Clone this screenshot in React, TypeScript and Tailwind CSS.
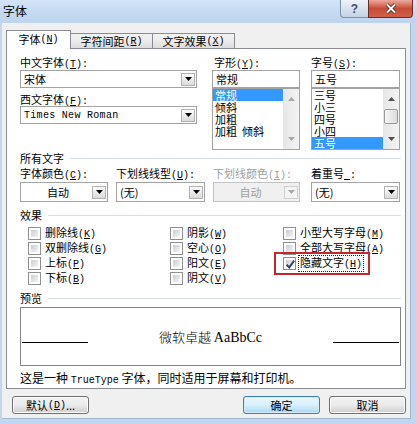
import React from "react";

const cjk = "font-['Noto_Sans_CJK_SC',sans-serif]";

function Acc({ k }: { k: string }) {
  return (
    <span className="font-['Liberation_Mono',monospace] text-[10px]">
      (<span className="underline">{k}</span>)
    </span>
  );
}

function Label({ text, k, colon = true, disabled }: { text: string; k: string; colon?: boolean; disabled?: boolean }) {
  return (
    <div className={`h-[14px] leading-[14px] whitespace-nowrap ${disabled ? "text-[#a0a0a0]" : "text-black"}`}>
      {text}
      <Acc k={k} />
      {colon ? <span className="font-['Liberation_Mono',monospace] text-[10px]">:</span> : ""}
    </div>
  );
}

function DropBtn({ disabled }: { disabled?: boolean }) {
  return (
    <div
      className={`flex h-[13px] w-[14px] items-center justify-center border ${
        disabled ? "border-[#d0d0d0] bg-[#f4f4f4]" : "border-[#b2b2b2] bg-gradient-to-b from-[#fdfdfd] to-[#dadada]"
      }`}
    >
      <svg width="7" height="4" viewBox="0 0 7 4">
        <path d="M0 0h7L3.5 4z" fill={disabled ? "#a8a8a8" : "#000"} />
      </svg>
    </div>
  );
}

function Combo({
  value,
  h = "h-[18px]",
  disabled,
  center,
  mono,
}: {
  value: string;
  h?: string;
  disabled?: boolean;
  center?: boolean;
  mono?: boolean;
}) {
  return (
    <div
      className={`flex ${h} items-center border pl-[3px] pr-[1px] ${
        disabled ? "border-[#c4c4c4] bg-[#f0f0f0] text-[#a0a0a0]" : "border-[#a3a3a3] bg-white text-black"
      }`}
    >
      <span
        className={`flex-1 whitespace-nowrap ${center ? "text-center" : ""} ${
          mono ? "font-['Liberation_Mono',monospace] text-[10px] tracking-[0.3px]" : "text-[11px]"
        }`}
      >
        {value}
      </span>
      <DropBtn disabled={disabled} />
    </div>
  );
}

function Arrow({ up, color }: { up?: boolean; color: string }) {
  return (
    <svg width="7" height="4" viewBox="0 0 7 4">
      <path d={up ? "M0 4h7L3.5 0z" : "M0 0h7L3.5 4z"} fill={color} />
    </svg>
  );
}

function ListBox({ items, selected, thumb }: { items: string[]; selected: number; thumb?: boolean }) {
  const arrow = thumb ? "#505050" : "#a9a9a9";
  return (
    <div className="flex h-[62px] border border-[#a3a3a3] bg-white">
      <div className="flex-1 overflow-hidden">
        {items.map((it, i) => (
          <div
            key={it}
            className={`h-[12px] whitespace-pre pl-[2px] text-[11px] leading-[12px] ${
              i === selected ? "bg-[#3399ff] text-white" : "text-black"
            }`}
          >
            {it}
          </div>
        ))}
      </div>
      <div className="flex w-[16px] flex-col items-center bg-gradient-to-r from-[#e6e6e6] to-[#f4f4f4] py-[8px]">
        <Arrow up color={arrow} />
        <div className="flex flex-1 items-start pt-[8px]">
          {thumb && (
            <div className="h-[15px] w-[14px] rounded-[2px] border border-[#9a9a9a] bg-gradient-to-r from-[#f6f6f6] to-[#dcdcdc]" />
          )}
        </div>
        <Arrow color={arrow} />
      </div>
    </div>
  );
}

function GroupHead({ title }: { title: string }) {
  return (
    <div className="flex h-[14px] items-center leading-[14px]">
      <span className="whitespace-nowrap">{title}</span>
      <div className="ml-[6px] h-px flex-1 bg-[#d5dfe5]" />
    </div>
  );
}

function Check({ checked }: { checked?: boolean }) {
  return (
    <div className="h-[13px] w-[13px] shrink-0 border border-[#8e8f8f] bg-white p-[2px]">
      <div className="relative h-full w-full bg-gradient-to-br from-[#c9cdd3] to-[#f5f5f5]">
        {checked && (
          <svg className="absolute -left-[2px] -top-[2px]" width="13" height="13" viewBox="0 0 13 13">
            <path d="M2.6 6.6 5.2 9.4 10.2 2.6" stroke="#2d3f6f" strokeWidth="1.9" fill="none" />
          </svg>
        )}
      </div>
    </div>
  );
}

function Effect({ text, k, checked, focus }: { text: string; k: string; checked?: boolean; focus?: boolean }) {
  return (
    <div className="flex h-[15px] items-center">
      <Check checked={checked} />
      <span
        className={`ml-[2px] whitespace-nowrap px-px leading-[13px] ${
          focus ? "border border-dotted border-[#222]" : "border border-transparent"
        }`}
      >
        {text}
        <Acc k={k} />
      </span>
    </div>
  );
}

function Button({ children, primary }: { children: React.ReactNode; primary?: boolean }) {
  return (
    <div
      className={`flex h-[18px] w-[77px] items-center justify-center rounded-[3px] border text-[11px] ${
        primary
          ? "border-[#3c7fb1] bg-gradient-to-b from-[#eaf6fd] via-[#d9f0fc] to-[#a7d9f5] shadow-[inset_0_0_0_1px_#d6ecf8]"
          : "border-[#707070] bg-gradient-to-b from-[#f2f2f2] via-[#ebebeb] to-[#cfcfcf] shadow-[inset_0_0_0_1px_#fcfcfc]"
      }`}
    >
      {children}
    </div>
  );
}

export default function App() {
  return (
    <div className={`flex h-[424px] w-[417px] flex-col overflow-hidden bg-[#c2d7ee] ${cjk} text-[11px] text-black`}>
      {/* title bar */}
      <div className="flex h-[23px] shrink-0 bg-gradient-to-b from-[#d3e4f6] via-[#c6dbf1] to-[#bed4ed]">
        <div className="pl-[3px] pt-[3px] text-[12px] leading-[16px]">字体</div>
        <div className="ml-auto flex h-[18px] pr-[4px]">
          <div className="flex w-[28px] items-center justify-center rounded-bl-[4px] border border-r-0 border-t-0 border-[#7d8fa7] bg-gradient-to-b from-[#eef3f9] via-[#d8e3ef] to-[#c4d3e4] font-['Liberation_Sans',sans-serif] text-[12px] font-bold text-[#3d5270]">
            ?
          </div>
          <div className="flex w-[45px] items-center justify-center rounded-br-[4px] border border-t-0 border-[#6d2a22] bg-gradient-to-b from-[#e9a99c] via-[#c94a35] to-[#d0614a]">
            <svg width="12" height="11" viewBox="0 0 12 11">
              <path d="M2 1.5 10 9.5M10 1.5 2 9.5" stroke="#3b140f" strokeWidth="3.4" />
              <path d="M2 1.5 10 9.5M10 1.5 2 9.5" stroke="#fff" strokeWidth="2" />
            </svg>
          </div>
        </div>
      </div>

      {/* client */}
      <div className="ml-[2px] mr-[6px] flex flex-1 flex-col border-b border-r border-[#9fb6d0] bg-[#f0f0f0] pl-[4px] pr-[4px] pt-[7px]">
        {/* tabs */}
        <div className="relative z-10 flex h-[18px] items-end">
          <div className="-mb-px flex h-[19px] w-[65px] items-center justify-center border border-b-0 border-[#898c95] bg-white pb-[1px]">
            字体<Acc k="N" />
          </div>
          <div className="flex h-[15px] w-[82px] items-center justify-center border border-b-0 border-l-0 border-[#898c95] bg-gradient-to-b from-[#f3f3f3] via-[#ebebeb] to-[#dcdcdc]">
            字符间距<Acc k="R" />
          </div>
          <div className="flex h-[15px] w-[82px] items-center justify-center border border-b-0 border-l-0 border-[#898c95] bg-gradient-to-b from-[#f3f3f3] via-[#ebebeb] to-[#dcdcdc]">
            文字效果<Acc k="X" />
          </div>
        </div>

        {/* panel */}
        <div className="flex h-[341px] flex-col border border-[#898c95] bg-white pl-[13px] pr-[4px]">
          <div className="mt-[6px] flex">
            <div className="w-[177px]">
              <Label text="中文字体" k="T" />
              <div className="mt-px">
                <Combo value="宋体" />
              </div>
              <div className="mt-[4px]">
                <Label text="西文字体" k="F" />
              </div>
              <Combo value="Times New Roman" mono />
            </div>
            <div className="ml-[15px] w-[88px]">
              <div className="pl-[2px]">
                <Label text="字形" k="Y" />
              </div>
              <div className="mt-px flex h-[18px] items-center border border-[#a3a3a3] pl-[3px]">常规</div>
              <ListBox items={["常规", "倾斜", "加粗", "加粗  倾斜"]} selected={0} />
            </div>
            <div className="ml-[11px] w-[89px]">
              <Label text="字号" k="S" />
              <div className="mt-px flex h-[18px] items-center border border-[#a3a3a3] pl-[3px]">五号</div>
              <ListBox items={["三号", "小三", "四号", "小四", "五号"]} selected={4} thumb />
            </div>
          </div>

          <div className="mt-px">
            <GroupHead title="所有文字" />
          </div>
          <div className="mt-px flex">
            <div className="w-[88px]">
              <Label text="字体颜色" k="C" />
              <div className="mt-[2px]">
                <Combo value="自动" h="h-[20px]" center />
              </div>
            </div>
            <div className="ml-[8px] w-[89px]">
              <Label text="下划线线型" k="U" />
              <div className="mt-[2px]">
                <Combo value="(无)" h="h-[20px]" />
              </div>
            </div>
            <div className="ml-[8px] w-[87px]">
              <Label text="下划线颜色" k="I" disabled />
              <div className="mt-[2px]">
                <Combo value="自动" h="h-[20px]" center disabled />
              </div>
            </div>
            <div className="ml-[11px] w-[89px]">
              <div className="h-[14px] whitespace-nowrap leading-[14px]">
                着重号<span className="font-['Liberation_Mono',monospace] text-[10px]"><span className="underline">&nbsp;</span>:</span>
              </div>
              <div className="mt-[2px]">
                <Combo value="(无)" h="h-[20px]" />
              </div>
            </div>
          </div>

          <div className="mt-[6px]">
            <GroupHead title="效果" />
          </div>
          <div className="mt-[4px] grid grid-cols-[142px_113px_1fr] pl-[8px]">
            <div>
              <Effect text="删除线" k="K" />
              <Effect text="双删除线" k="G" />
              <Effect text="上标" k="P" />
              <Effect text="下标" k="B" />
            </div>
            <div>
              <Effect text="阴影" k="W" />
              <Effect text="空心" k="O" />
              <Effect text="阳文" k="E" />
              <Effect text="阴文" k="V" />
            </div>
            <div>
              <Effect text="小型大写字母" k="M" />
              <Effect text="全部大写字母" k="A" />
              <div className="relative">
                <Effect text="隐藏文字" k="H" checked focus />
                <div className="absolute -left-[9px] -top-[4px] h-[23px] w-[96px] border-2 border-[#c1272d]" />
              </div>
            </div>
          </div>

          <div className="mt-[5px]">
            <GroupHead title="预览" />
          </div>
          <div className="mt-[2px] flex h-[59px] items-start border border-[#838383] px-px pt-[22px]">
            <div className="mt-[12px] h-px w-[66px] bg-black" />
            <div className="flex-1 text-center text-[13px] font-light leading-[13px]">
              微软卓越 <span className="font-['Liberation_Serif',serif] text-[14px] font-normal">AaBbCc</span>
            </div>
            <div className="mt-[12px] h-px w-[66px] bg-black" />
          </div>
          <div className="mt-[5px] h-[14px] whitespace-nowrap text-[12px] leading-[14px]">
            这是一种 <span className="font-['Liberation_Mono',monospace] text-[10px]">TrueType</span> 字体，同时适用于屏幕和打印机。
          </div>
        </div>

        {/* buttons */}
        <div className="mt-[7px] flex pl-[6px]">
          <div className="w-[76px]">
            <Button>
              默认<Acc k="D" />...
            </Button>
          </div>
          <div className="ml-auto flex gap-[9px]">
            <Button primary>确定</Button>
            <Button>取消</Button>
          </div>
        </div>
      </div>
      <div className="h-[5px] shrink-0" />
    </div>
  );
}
